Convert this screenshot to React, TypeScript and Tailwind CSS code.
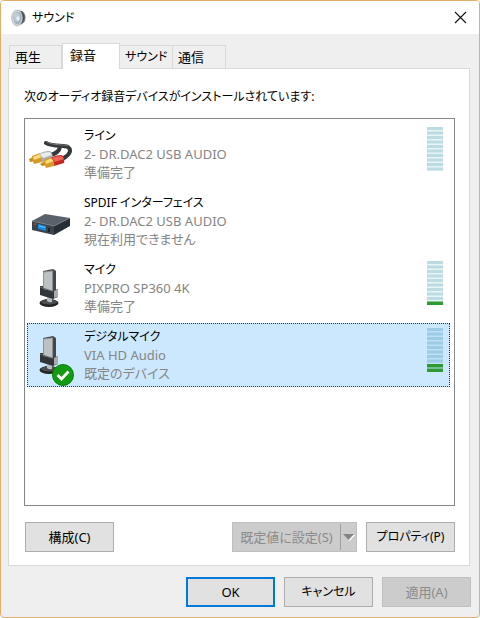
import { ReactNode, useState } from "react";
import clsx from "clsx";

interface Device {
  name: string;
  description: string;
  status: string;
  level?: number;
  isDefault?: boolean;
  icon: ReactNode;
}

const SpeakerIcon = () => (
  <svg width="16" height="18" viewBox="0 0 16 18" aria-hidden="true">
    <path d="M6 1 11 2Q14.500 4 14.500 8.500 14.500 13 11 15L6 17z" fill="#77797b" />
    <path d="M10 2q4 3 3.500 7T10 15z" fill="#4b4e50" />
    <ellipse cx="6" cy="9" rx="5.300" ry="8" fill="#d3d6d8" stroke="#b2b6b8" strokeWidth=".8" />
    <ellipse cx="6.500" cy="9" rx="4" ry="6.300" fill="#9fb3bf" />
    <ellipse cx="6" cy="8" rx="2.800" ry="4.500" fill="#bfced6" />
    <ellipse cx="7" cy="9.500" rx="1.500" ry="2.200" fill="#e8eff3" />
  </svg>
);

const CableIcon = () => (
  <svg width="44" height="30" viewBox="0 0 44 30" aria-hidden="true">
    <path d="M17 4C25 8 34 6 39 8 43 11 41 16 33 20" fill="none" stroke="#36393c" strokeWidth="4" strokeLinecap="round" />
    <path d="M21 16C26 15 30 13 31 8" fill="none" stroke="#36393c" strokeWidth="4" />
    <path d="M18 3C26 7 34 5 39 7" fill="none" stroke="#74787b" strokeWidth="1" />
    <path d="M0 20 4 18 6 22 1 23z" fill="#c98c1f" />
    <path d="M3 17 11 14Q15 18 13 23L5 25Q3 21 3 17z" fill="#d79a27" />
    <path d="M4 18 11 15 13 18 5 21z" fill="#f9dc7c" />
    <path d="M10 15Q14 12 21 12 25 15 23 20L13 23Q14 18 10 15z" fill="#a9adb0" />
    <path d="M11 15Q16 13 21 13L23 16 14 19z" fill="#e9ebec" />
    <path d="M11 25 16 22 18 26 13 27z" fill="#c98c1f" />
    <path d="M15 21 23 18Q27 22 25 27L17 29Q15 25 15 21z" fill="#d79a27" />
    <path d="M16 22 23 19 25 22 17 25z" fill="#f9dc7c" />
    <path d="M22 19Q26 16 33 16 36 19 35 24L25 27Q26 22 22 19z" fill="#c4281e" />
    <path d="M23 19Q28 17 33 17L35 20 26 23z" fill="#ee6658" />
  </svg>
);

const ReceiverIcon = () => (
  <svg width="40" height="30" viewBox="0 0 40 30" aria-hidden="true">
    <path d="M1 15 14 8 39 12 23 20z" fill="#59616a" />
    <path d="M1 15 23 20V29L1 24z" fill="#3b434b" />
    <path d="M23 20 39 12V20L23 29z" fill="#262d34" />
    <path d="M1 15 23 20 39 12" stroke="#77808a" strokeWidth=".7" fill="none" />
    <path d="M7 18 15 20V25L7 23z" fill="#1689df" />
    <path d="M8 20 14 21.500" stroke="#6bc5ff" />
    <circle cx="4" cy="18" r="1" fill="#c8443b" />
    <path d="M18 22V26" stroke="#15191d" strokeWidth="1.500" />
  </svg>
);

const MicrophoneIcon = () => (
  <svg className="-ml-1" width="20" height="40" viewBox="0 0 20 40" aria-hidden="true">
    <ellipse cx="10" cy="35" rx="9.500" ry="4" fill="#222426" />
    <ellipse cx="10" cy="34" rx="8" ry="2.500" fill="#4a4d4f" />
    <path d="M8 27H13V34Q10 35 8 33z" fill="#b9bdbf" />
    <path d="M4 3 14 1 17 3V25L4 22z" fill="#45484a" />
    <path d="M4 3.500 14 2.500V24L4 22z" fill="#8f9294" />
    <path d="M5 4.500 13 3.500V23L5 21z" fill="#bec1c2" />
    <path d="M1 18 4 18V21L14 23 19 21V29L14 31 1 27z" fill="#333638" />
    <path d="M15 23 19 21V29L15 30z" fill="#a8acae" />
    <path d="M1 19 14 23.500" stroke="#65696b" />
  </svg>
);

const DefaultBadge = () => (
  <svg className="absolute left-[23px] top-[39px]" width="24" height="24" viewBox="0 0 24 24" aria-hidden="true">
    <circle cx="12" cy="12" r="10.500" fill="#139a13" stroke="#078107" />
    <path d="M6.500 12 10.500 16 17.500 8.500" fill="none" stroke="#fff" strokeWidth="2.800" />
  </svg>
);

const segments = [0, 1, 2, 3, 4, 5, 6, 7, 8, 9];

const LevelMeter = ({ level, selected }: { level: number; selected: boolean }) => (
  <svg width="16" height="45" viewBox="0 0 16 45" role="img" aria-label={`${level}`}>
    <rect width="16" height="44" fill={selected ? "#bfe1f5" : "#e9f4f6"} />
    {segments.map((i) => (
      <rect
        key={i}
        y={i * 4.5}
        width="16"
        height={i >= 10 - level ? 3.5 : 3}
        fill={i >= 10 - level ? "#2f9a32" : selected ? "#9ccbe5" : "#bddbe3"}
      />
    ))}
  </svg>
);

const devices: Device[] = [
  { name: "ライン", description: "2- DR.DAC2 USB AUDIO", status: "準備完了", level: 0, icon: <CableIcon /> },
  { name: "SPDIF インターフェイス", description: "2- DR.DAC2 USB AUDIO", status: "現在利用できません", icon: <ReceiverIcon /> },
  { name: "マイク", description: "PIXPRO SP360 4K", status: "準備完了", level: 1, icon: <MicrophoneIcon /> },
  { name: "デジタルマイク", description: "VIA HD Audio", status: "既定のデバイス", level: 2, isDefault: true, icon: <MicrophoneIcon /> },
];

const tabs = [
  { label: "再生", size: "text-[13px]" },
  { label: "録音", size: "text-[13px]" },
  { label: "サウンド", size: "text-xs" },
  { label: "通信", size: "text-[13px]" },
];

interface ButtonProps {
  children: ReactNode;
  primary?: boolean;
  disabled?: boolean;
  small?: boolean;
}

const Button = ({ children, primary, disabled, small }: ButtonProps) => (
  <button
    type="button"
    disabled={disabled}
    className={clsx(
      "h-[30px] w-[89px] whitespace-nowrap",
      small && "text-xs",
      primary && "border-2 border-[#0078d7] bg-[#e1e1e1]",
      disabled && "border border-[#bfbfbf] bg-[#cccccc] text-[#8b8b8b]",
      !primary && !disabled && "border border-[#adadad] bg-[#e1e1e1]",
    )}
  >
    {children}
  </button>
);

export default function App() {
  const [tab, setTab] = useState(1);
  const [selected, setSelected] = useState(3);

  return (
    <div className="flex min-h-screen flex-col overflow-hidden rounded-[4px] border border-[#e2ae69] bg-[#efefef] font-['Noto_Sans','Noto_Sans_CJK_JP',sans-serif] text-[13px] leading-[18px] text-black [font-feature-settings:'palt']">
      <header className="flex h-[33px] items-center bg-white pl-[10px] pr-[11px]">
        <SpeakerIcon />
        <h1 className="ml-[5px] flex-1 text-xs">サウンド</h1>
        <button type="button" aria-label="閉じる" className="p-px">
          <svg width="13" height="13" viewBox="0 0 13 13" fill="none" stroke="#111" strokeWidth="1.100">
            <path d="M1 1 12 12M12 1 1 12" />
          </svg>
        </button>
      </header>

      <main className="flex flex-1 flex-col px-[7px] pb-[10px] pt-[9px]">
        <div role="tablist" className="flex h-[25px] items-end pl-px">
          {tabs.map(({ label, size }, i) => (
            <button
              key={label}
              type="button"
              role="tab"
              aria-selected={tab === i}
              onClick={() => setTab(i)}
              className={clsx(
                "border-[#d9d9d9] text-left whitespace-nowrap",
                size,
                tab === i
                  ? "relative -mb-px h-[26px] w-[58px] border-x border-t bg-white pb-1 pl-[7px]"
                  : "h-[23px] w-[53px] border-t border-r pl-[5px] first:border-l",
              )}
            >
              {label}
            </button>
          ))}
        </div>

        <section role="tabpanel" className="mr-[2px] flex flex-1 flex-col border border-[#d9d9d9] bg-white pb-[13px] pl-[15px] pr-[14px] pt-[19px]">
          <p className="text-xs leading-[18px]">次のオーディオ録音デバイスがインストールされています:</p>

          <ul role="listbox" className="mt-3 flex flex-1 flex-col gap-[3px] border border-[#828790] py-[3px] pl-[2px] pr-1">
            {devices.map((device, i) => (
              <li
                key={device.name}
                role="option"
                aria-selected={selected === i}
                onClick={() => setSelected(i)}
                className={clsx(
                  "relative flex h-16 items-center border border-dotted",
                  selected === i ? "border-[#26384a] bg-[#cce8ff]" : "border-transparent",
                )}
              >
                <div className="flex w-[46px] justify-center">{device.icon}</div>
                {device.isDefault && <DefaultBadge />}
                <div className="ml-[10px] flex-1 text-[#858585]">
                  <p className="text-xs leading-[18px] text-black">{device.name}</p>
                  <p>{device.description}</p>
                  <p>{device.status}</p>
                </div>
                {device.level !== undefined && (
                  <div className="mr-[6px] self-start pt-1">
                    <LevelMeter level={device.level} selected={selected === i} />
                  </div>
                )}
              </li>
            ))}
          </ul>

          <div className="mt-4 flex pl-px">
            <Button>構成(C)</Button>
            <div className="ml-auto mr-[9px] flex h-[30px] border border-[#bfbfbf] bg-[#cccccc] text-[#8b8b8b]">
              <button type="button" disabled className="w-[107px] whitespace-nowrap">
                既定値に設定(S)
              </button>
              <button type="button" disabled aria-label="既定値" className="my-px flex w-4 items-center justify-center border-l border-[#a0a0a0]">
                <svg width="12" height="7" viewBox="0 0 12 7">
                  <path d="M1 1H12L6.500 7z" fill="#fff" />
                  <path d="M0 0H11L5.500 6z" fill="#838383" />
                </svg>
              </button>
            </div>
            <Button small>プロパティ(P)</Button>
          </div>
        </section>

        <footer className="mt-[11px] flex justify-end gap-[9px] pr-px">
          <Button primary>OK</Button>
          <Button small>キャンセル</Button>
          <Button disabled>適用(A)</Button>
        </footer>
      </main>
    </div>
  );
}
